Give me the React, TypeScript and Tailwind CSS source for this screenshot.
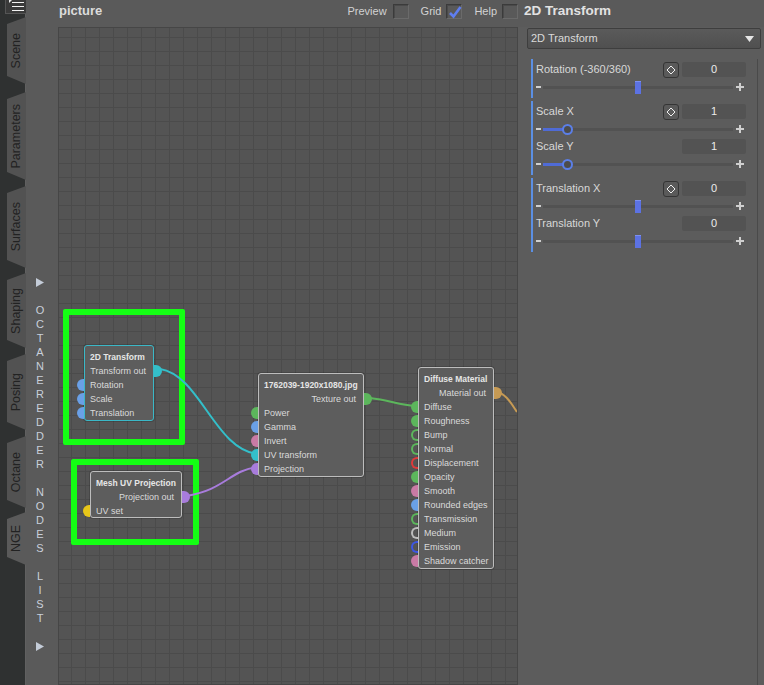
import React from "react";

const FONT = "font-['Liberation_Sans',Arial,sans-serif]";

interface NodeRow {
  label: string;
  out?: boolean;
  port?: string;
}

interface NodeData {
  title: string;
  pos: string;
  border: string;
  rows: NodeRow[];
}

const fillGreen = "bg-[#5cb65c]";
const hollowGreen = "border-2 border-r-0 border-[#5cb65c]";

const nodes: NodeData[] = [
  {
    title: "2D Transform",
    pos: "left-[25px] top-[317px] w-[70px] h-[76px]",
    border: "border-[#3bb8c7]",
    rows: [
      { label: "Transform out", out: true, port: "bg-[#33bfca]" },
      { label: "Rotation", port: "bg-[#6aa0e6]" },
      { label: "Scale", port: "bg-[#6aa0e6]" },
      { label: "Translation", port: "bg-[#6aa0e6]" },
    ],
  },
  {
    title: "Mesh UV Projection",
    pos: "left-[31px] top-[443px] w-[92px] h-[47px]",
    border: "border-[#bdbdbd]",
    rows: [
      { label: "Projection out", out: true, port: "bg-[#a87cdc]" },
      { label: "UV set", port: "bg-[#e8c619]" },
    ],
  },
  {
    title: "1762039-1920x1080.jpg",
    pos: "left-[199px] top-[345px] w-[106px] h-[104px]",
    border: "border-[#bdbdbd]",
    rows: [
      { label: "Texture out", out: true, port: fillGreen },
      { label: "Power", port: fillGreen },
      { label: "Gamma", port: "bg-[#6aa0e6]" },
      { label: "Invert", port: "bg-[#c97aa5]" },
      { label: "UV transform", port: "bg-[#33bfca]" },
      { label: "Projection", port: "bg-[#a87cdc]" },
    ],
  },
  {
    title: "Diffuse Material",
    pos: "left-[359px] top-[339px] w-[76px] h-[202px]",
    border: "border-[#bdbdbd]",
    rows: [
      { label: "Material out", out: true, port: "bg-[#c69a54]" },
      { label: "Diffuse", port: fillGreen },
      { label: "Roughness", port: fillGreen },
      { label: "Bump", port: hollowGreen },
      { label: "Normal", port: hollowGreen },
      { label: "Displacement", port: "border-2 border-r-0 border-[#e03a3a]" },
      { label: "Opacity", port: fillGreen },
      { label: "Smooth", port: "bg-[#c97aa5]" },
      { label: "Rounded edges", port: "bg-[#6aa0e6]" },
      { label: "Transmission", port: hollowGreen },
      { label: "Medium", port: "border-2 border-r-0 border-[#bdbdbd]" },
      { label: "Emission", port: "border-2 border-r-0 border-[#3c56e6]" },
      { label: "Shadow catcher", port: "bg-[#c97aa5]" },
    ],
  },
];

const tabs = [
  { label: "Scene", cls: "mt-[3px] h-[67px]" },
  { label: "Parameters", cls: "mt-[8px] h-[88px]" },
  { label: "Surfaces", cls: "mt-[6px] h-[82px]" },
  { label: "Shaping", cls: "mt-[5px] h-[75px]" },
  { label: "Posing", cls: "mt-[6px] h-[76px]" },
  { label: "Octane", cls: "mt-[6px] h-[72px]" },
  { label: "NGE", cls: "mt-[4px] h-[53px]", active: true },
];

// the strip shows one letter per line, a blank line between words
const listLetters = "OCTANEREDDER NODES LIST".split("");

function Arrow() {
  return (
    <svg width="8" height="9" viewBox="0 0 8 9">
      <polygon points="0,0 8,4.5 0,9" fill="#c4ccd8" />
    </svg>
  );
}

function GraphNode({ n }: { n: NodeData }) {
  return (
    <div
      className={`absolute ${n.pos} border ${n.border} rounded-[3px] bg-[#5d5d5d] pt-[4px] shadow-[0_0_0_1px_rgba(0,0,0,0.15)]`}
    >
      <div className="h-[14px] leading-[14px] pl-[5px] text-[8.5px] font-bold text-[#e6e6e6] whitespace-nowrap">
        {n.title}
      </div>
      {n.rows.map((r) => (
        <div
          key={r.label}
          className={`relative h-[14px] leading-[14px] text-[9px] text-[#dadada] whitespace-nowrap ${
            r.out ? "text-right pr-[7px]" : "pl-[5px]"
          }`}
        >
          {r.label}
          {r.port &&
            (r.out ? (
              <span
                className={`absolute right-[-9px] top-[1px] w-[8px] h-[12px] rounded-r-full ${r.port}`}
              />
            ) : (
              <span
                className={`absolute left-[-8px] top-[1px] w-[7px] h-[12px] rounded-l-full ${r.port}`}
              />
            ))}
        </div>
      ))}
    </div>
  );
}

function Checkbox({ checked }: { checked?: boolean }) {
  return (
    <div className="relative w-[16px] h-[15px] bg-[#595959] border border-[#3b3b3b] border-b-[#6a6a6a] border-r-[#6a6a6a] shadow-[inset_1px_1px_0_#4a4a4a]">
      {checked && (
        <svg className="absolute left-[1px] top-[0px]" width="14" height="14" viewBox="0 0 14 14">
          <path d="M2 8 L5.5 11.5 L12.5 2" fill="none" stroke="#5f7ef0" strokeWidth="2.6" />
        </svg>
      )}
    </div>
  );
}

function KeyButton() {
  return (
    <div className="w-[16px] h-[16px] rounded-[3px] border border-[#353535] bg-[#5a5a5a] flex items-center justify-center">
      <svg width="10" height="10" viewBox="0 0 10 10">
        <path d="M5 1 L9 5 L5 9 L1 5 Z" fill="none" stroke="#f0f0f0" strokeWidth="1" />
      </svg>
    </div>
  );
}

interface Param {
  label: string;
  value: string;
  key?: boolean;
  handle: "rect" | "circle";
  at: number;
}

const groups: Param[][] = [
  [{ label: "Rotation (-360/360)", value: "0", key: true, handle: "rect", at: 92 }],
  [
    { label: "Scale X", value: "1", key: true, handle: "circle", at: 24 },
    { label: "Scale Y", value: "1", handle: "circle", at: 24 },
  ],
  [
    { label: "Translation X", value: "0", key: true, handle: "rect", at: 92 },
    { label: "Translation Y", value: "0", handle: "rect", at: 92 },
  ],
];

function Slider({ handle, at }: { handle: "rect" | "circle"; at: number }) {
  return (
    <div className="h-[18px] flex items-center">
      <div className="w-[5px] h-[2px] bg-[#cfcfcf]" />
      <div className="relative ml-[2px] w-[190px] h-[3px] bg-[#525252]">
        {handle === "rect" ? (
          <div
            className="absolute top-[-5px] w-[6px] h-[13px] bg-[#5c72e3] shadow-[inset_0_1px_0_#7d90ee]"
            style={{ left: at }}
          />
        ) : (
          <>
            <div className="absolute left-0 top-[0px] h-[3px] bg-[#4f6bd6]" style={{ width: at }} />
            <div
              className="absolute top-[-4px] w-[11px] h-[11px] rounded-full border-2 border-[#5b7fe8] bg-[#4c4c4c]"
              style={{ left: at - 5 }}
            />
          </>
        )}
      </div>
      <svg className="ml-[3px]" width="8" height="8" viewBox="0 0 8 8">
        <path d="M0 4 H8 M4 0 V8" stroke="#cfcfcf" strokeWidth="2" />
      </svg>
    </div>
  );
}

export default function App() {
  return (
    <div className={`w-[764px] h-[685px] overflow-hidden flex bg-[#5a5a5a] ${FONT}`}>
      {/* side tabs */}
      <div className="w-[26px] h-full bg-[#2f3131] flex flex-col border-r border-[#606060]">
        <div className="ml-[5px] w-[21px] h-[14px] bg-[#3a3a3a] border-b border-l border-[#555] relative">
          <svg className="absolute left-0 top-0" width="21" height="14" viewBox="0 0 21 14">
            <path d="M3 0 L6 0 L3 3 Z" fill="#e8e8e8" />
            <path d="M6 2.5 H18 M6 6.5 H18 M6 10.5 H18" stroke="#f2f2f2" strokeWidth="1.2" />
          </svg>
        </div>
        {tabs.map((t) => (
          <div
            key={t.label}
            className={`${t.cls} ml-[7px] w-[19px] rounded-l-[6px] flex items-center justify-center [clip-path:polygon(0_7px,100%_0,100%_100%,0_calc(100%-8px))] ${
              t.active ? "bg-[#5a5a5a]" : "bg-[#525252]"
            }`}
          >
            <span className="[writing-mode:vertical-rl] rotate-180 text-[12.5px] leading-none text-[#222222]">
              {t.label}
            </span>
          </div>
        ))}
      </div>

      {/* node list strip */}
      <div className="w-[32px] h-full flex flex-col items-center pt-[275px] pr-[4px]">
        <div className="h-[14px] flex items-center">
          <Arrow />
        </div>
        <div className="h-[14px]" />
        {listLetters.map((c, i) => (
          <div key={i} className="h-[14px] leading-[14px] text-[11px] text-[#c9d0da]">
            {c === " " ? "" : c}
          </div>
        ))}
        <div className="h-[14px]" />
        <div className="h-[14px] flex items-center">
          <Arrow />
        </div>
      </div>

      {/* graph column */}
      <div className="w-[460px] h-full flex flex-col">
        <div className="h-[27px] flex items-center pb-[5px] pl-[1px]">
          <span className="text-[13px] font-bold text-[#dcdcdc]">picture</span>
          <div className="ml-auto flex items-center text-[11px] text-[#d2d2d2]">
            <span>Preview</span>
            <div className="ml-[6px]">
              <Checkbox />
            </div>
            <span className="ml-[12px]">Grid</span>
            <div className="ml-[5px]">
              <Checkbox checked />
            </div>
            <span className="ml-[12px]">Help</span>
            <div className="ml-[5px]">
              <Checkbox />
            </div>
          </div>
        </div>
        <div className="relative flex-1 border border-[#464646] bg-[#545454] [background-image:linear-gradient(to_right,#4b4b4b_1px,transparent_1px),linear-gradient(to_bottom,#4b4b4b_1px,transparent_1px)] [background-size:14px_14px] [background-position:12px_9px] overflow-hidden">
          {/* highlight boxes */}
          <div className="absolute left-[4px] top-[281px] w-[122px] h-[136px] border-[6px] border-[#14ff14] rounded-[2px]" />
          <div className="absolute left-[12px] top-[431px] w-[128px] h-[86px] border-[6px] border-[#14ff14] rounded-[2px]" />

          <svg className="absolute left-0 top-0" width="458" height="656">
            <path d="M101 341 C141 347, 156 422, 199 426" fill="none" stroke="#33bfca" strokeWidth="2" />
            <path d="M127 468 C166 462, 171 442, 199 439" fill="none" stroke="#a87cdc" strokeWidth="2" />
            <path d="M311 370 C330 372, 340 377, 356 378" fill="none" stroke="#5cb65c" strokeWidth="2.2" />
            <path d="M438 364 C447 366, 452 375, 458 384" fill="none" stroke="#c69a54" strokeWidth="2" />
          </svg>

          {nodes.map((n) => (
            <GraphNode key={n.title} n={n} />
          ))}
        </div>
      </div>

      {/* parameter panel */}
      <div className="w-[246px] h-full bg-[#5c5c5c] flex flex-col">
        <div className="h-[27px] flex items-center pb-[5px] pl-[6px] bg-[#5a5a5a]">
          <span className="text-[13.5px] font-bold text-[#e2e2e2]">2D Transform</span>
        </div>
        <div className="ml-[9px] mt-[1px] w-[234px] h-[21px] rounded-[2px] border border-[#3e3e3e] bg-[linear-gradient(#5a5a5a,#505050)] flex items-center pl-[3px] pr-[6px]">
          <span className="text-[11px] text-[#dadada]">2D Transform</span>
          <svg className="ml-auto" width="9" height="6" viewBox="0 0 9 6">
            <polygon points="0,0 9,0 4.5,6" fill="#e6e6e6" />
          </svg>
        </div>
        <div className="ml-[13px] mt-[10px] w-[227px] flex-1 border-r border-[#4a4a4a] flex flex-col gap-[3px]">
          {groups.map((g, gi) => (
            <div key={gi} className="border-l-2 border-[#5b8fe3] pl-[3px] pr-[11px] pt-[2px] pb-[2px]">
              {g.map((p) => (
                <div key={p.label}>
                  <div className="h-[17px] flex items-center">
                    <span className="flex-1 text-[11px] text-[#d8d8d8] whitespace-nowrap">{p.label}</span>
                    {p.key ? <KeyButton /> : <div className="w-[16px]" />}
                    <div className="ml-[3px] w-[64px] h-[15px] rounded-[2px] bg-[#535353] flex items-center justify-center text-[11px] text-[#ececec]">
                      {p.value}
                    </div>
                  </div>
                  <Slider handle={p.handle} at={p.at} />
                </div>
              ))}
            </div>
          ))}
        </div>
      </div>
    </div>
  );
}
